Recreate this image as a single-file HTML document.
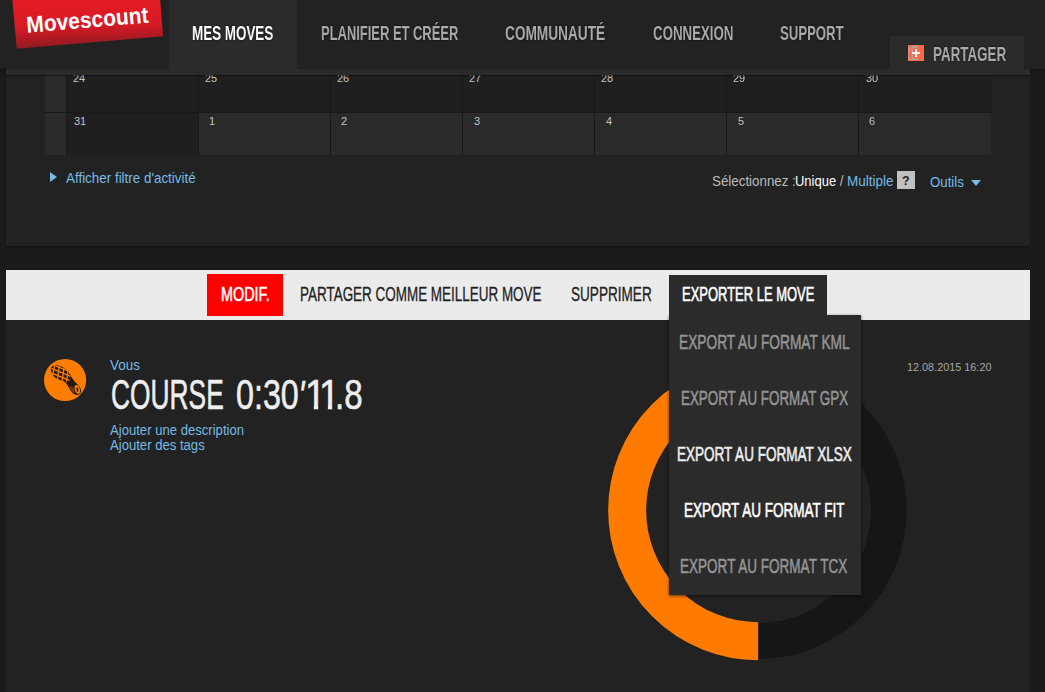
<!DOCTYPE html>
<html lang="fr"><head><meta charset="utf-8"><title>Movescount</title>
<style>
html,body{margin:0;padding:0}
body{width:1045px;height:692px;overflow:hidden;background:#1b1b1b;font-family:"Liberation Sans",sans-serif;font-size:13px;color:#ccc;position:relative}
.a{position:absolute}
.c{position:absolute;white-space:pre;transform-origin:0 0;display:block}
h1{margin:0;font-weight:normal}
.ib{display:inline-block;vertical-align:top;transform-origin:0 0;white-space:pre}
a{text-decoration:none;cursor:pointer}
b{font-weight:normal}
</style></head><body>

<header>
<div class="a" style="left:0px;top:0px;width:1045px;height:69px;background:#222;box-shadow:0 1px 3px rgba(0,0,0,.45)"></div>
<div class="a" style="left:169px;top:0px;width:128px;height:69px;background:#2b2b2b;"></div>
<svg class="a" style="left:0;top:0" width="170" height="60" viewBox="0 0 170 60"><defs><linearGradient id="lg" x1="0" y1="0" x2="0.08" y2="1"><stop offset="0" stop-color="#e31b23"/><stop offset="0.55" stop-color="#d81a25"/><stop offset="1" stop-color="#8f1a22"/></linearGradient></defs><polygon points="12.4,0 160.2,0 163,36.2 16.7,48.8" fill="url(#lg)"/><text x="0" y="0" transform="translate(27,32.8) rotate(-4.8) scale(0.912,1)" font-family="Liberation Sans, sans-serif" font-weight="bold" font-size="23" fill="#fff">Movescount</text></svg>
<nav>
<a class="c" style="left:191.75px;top:23.00px;font-size:20.29px;line-height:20.29px;font-weight:bold;color:#fff;transform:scaleX(0.6615);text-shadow:0 0 2px rgba(0,0,0,.9);will-change:transform;">MES MOVES</a>
<a class="c" style="left:320.75px;top:23.00px;font-size:20.29px;line-height:20.29px;font-weight:bold;color:#aaa;transform:scaleX(0.6379);text-shadow:0 0 2px rgba(0,0,0,.9);will-change:transform;">PLANIFIER ET CRÉER</a>
<a class="c" style="left:505.36px;top:23.00px;font-size:20.29px;line-height:20.29px;font-weight:bold;color:#aaa;transform:scaleX(0.6727);text-shadow:0 0 2px rgba(0,0,0,.9);will-change:transform;">COMMUNAUTÉ</a>
<a class="c" style="left:652.58px;top:23.00px;font-size:20.29px;line-height:20.29px;font-weight:bold;color:#aaa;transform:scaleX(0.6538);text-shadow:0 0 2px rgba(0,0,0,.9);will-change:transform;">CONNEXION</a>
<a class="c" style="left:779.90px;top:23.00px;font-size:20.29px;line-height:20.29px;font-weight:bold;color:#aaa;transform:scaleX(0.6480);text-shadow:0 0 2px rgba(0,0,0,.9);will-change:transform;">SUPPORT</a>
</nav>
<div class="a" style="left:890px;top:36px;width:134px;height:33px;background:#2b2b2b;"></div>
<div class="a" style="left:908px;top:45px;width:16px;height:16px;background:#fb6a48;overflow:hidden"><span class="c" style="left:-5.7px;top:-1.1px;font-size:19.5px;line-height:19.5px;color:#aaa;transform:scaleX(.62);will-change:transform">RE</span><div class="a" style="left:7.25px;top:3.8px;width:1.5px;height:8.7px;background:rgba(255,255,255,.95)"></div><div class="a" style="left:3.6px;top:7.25px;width:8.8px;height:1.5px;background:rgba(255,255,255,.9)"></div></div>
<a class="c" style="left:932.75px;top:44.00px;font-size:20.29px;line-height:20.29px;font-weight:bold;color:#aaa;transform:scaleX(0.6601);text-shadow:0 0 2px rgba(0,0,0,.9);will-change:transform;">PARTAGER</a>
</header>
<section>
<div class="a" style="left:6px;top:69px;width:1024px;height:177px;background:#222;box-shadow:0 1px 2px rgba(0,0,0,.35)"></div>
<div class="a" style="left:45px;top:69px;width:946px;height:86px;background:#1f1f1f;"></div>
<div class="a" style="left:45px;top:75px;width:21px;height:80px;background:#2b2b2b;"></div>
<div class="a" style="left:198px;top:113px;width:793px;height:42px;background:#2a2a2a;"></div>
<div class="a" style="left:45px;top:112px;width:946px;height:1px;background:#181818;"></div>
<div class="a" style="left:66px;top:75px;width:1px;height:80px;background:#181818;"></div>
<div class="a" style="left:198px;top:75px;width:1px;height:80px;background:#181818;"></div>
<div class="a" style="left:330px;top:75px;width:1px;height:80px;background:#181818;"></div>
<div class="a" style="left:462px;top:75px;width:1px;height:80px;background:#181818;"></div>
<div class="a" style="left:594px;top:75px;width:1px;height:80px;background:#181818;"></div>
<div class="a" style="left:726px;top:75px;width:1px;height:80px;background:#181818;"></div>
<div class="a" style="left:858px;top:75px;width:1px;height:80px;background:#181818;"></div>
<span class="c" style="left:73.02px;top:72.80px;font-size:10.67px;line-height:10.67px;font-weight:normal;color:#c4c4c4;transform:scaleX(1.0300);">24</span>
<span class="c" style="left:73.71px;top:115.80px;font-size:10.67px;line-height:10.67px;font-weight:normal;color:#c4c4c4;transform:scaleX(1.0300);">31</span>
<span class="c" style="left:205.02px;top:72.80px;font-size:10.67px;line-height:10.67px;font-weight:normal;color:#c4c4c4;transform:scaleX(1.0300);">25</span>
<span class="c" style="left:208.83px;top:115.80px;font-size:10.67px;line-height:10.67px;font-weight:normal;color:#c4c4c4;transform:scaleX(1.0300);">1</span>
<span class="c" style="left:337.02px;top:72.80px;font-size:10.67px;line-height:10.67px;font-weight:normal;color:#c4c4c4;transform:scaleX(1.0300);">26</span>
<span class="c" style="left:341.02px;top:115.80px;font-size:10.67px;line-height:10.67px;font-weight:normal;color:#c4c4c4;transform:scaleX(1.0300);">2</span>
<span class="c" style="left:469.02px;top:72.80px;font-size:10.67px;line-height:10.67px;font-weight:normal;color:#c4c4c4;transform:scaleX(1.0300);">27</span>
<span class="c" style="left:473.71px;top:115.80px;font-size:10.67px;line-height:10.67px;font-weight:normal;color:#c4c4c4;transform:scaleX(1.0300);">3</span>
<span class="c" style="left:601.02px;top:72.80px;font-size:10.67px;line-height:10.67px;font-weight:normal;color:#c4c4c4;transform:scaleX(1.0300);">28</span>
<span class="c" style="left:606.07px;top:115.80px;font-size:10.67px;line-height:10.67px;font-weight:normal;color:#c4c4c4;transform:scaleX(1.0300);">4</span>
<span class="c" style="left:733.02px;top:72.80px;font-size:10.67px;line-height:10.67px;font-weight:normal;color:#c4c4c4;transform:scaleX(1.0300);">29</span>
<span class="c" style="left:737.69px;top:115.80px;font-size:10.67px;line-height:10.67px;font-weight:normal;color:#c4c4c4;transform:scaleX(1.0300);">5</span>
<span class="c" style="left:865.71px;top:72.80px;font-size:10.67px;line-height:10.67px;font-weight:normal;color:#c4c4c4;transform:scaleX(1.0300);">30</span>
<span class="c" style="left:869.00px;top:115.80px;font-size:10.67px;line-height:10.67px;font-weight:normal;color:#c4c4c4;transform:scaleX(1.0300);">6</span>
<div class="a" style="left:6px;top:69px;width:1024px;height:6px;background:#2b2b2b;box-shadow:0 1px 1px rgba(0,0,0,.4)"></div>
<div class="a" style="left:50px;top:172px;width:0;height:0;border-left:7px solid #74bbe7;border-top:5px solid transparent;border-bottom:5px solid transparent"></div>
<a class="c" style="left:66.25px;top:170.71px;font-size:13.33px;line-height:13.33px;font-weight:normal;color:#74bbe7;transform:scale(1.0055,1.0700);">Afficher filtre d&#x27;activité</a>
<div class="c" style="left:0;top:173.71px;font-size:13.33px;line-height:13.33px"><span class="ib" style="margin-left:711.91px;transform:scale(1.0012,1.07);color:#bbb;">Sélectionnez :</span><b class="ib" style="margin-left:-0.36px;transform:scale(0.9731,1.07);color:#fff;position:relative;top:-0.08px;">Unique</b><span class="ib" style="margin-left:-1.38px;transform:scale(1.0000,1.07);color:#bbb;position:relative;top:-0.03px;"> / </span><a class="ib" style="margin-left:-0.43px;transform:scale(1.0133,1.07);color:#74bbe7;position:relative;top:-0.02px;">Multiple</a></div>
<div class="a" style="left:897px;top:171px;width:18px;height:18px;background:#c0c0c0;"></div>
<span class="c" style="left:902.23px;top:175.09px;font-size:12.5px;line-height:12.5px;font-weight:bold;color:#222;transform:scaleX(0.9977);">?</span>
<a class="c" style="left:929.71px;top:174.66px;font-size:13.33px;line-height:13.33px;font-weight:normal;color:#74bbe7;transform:scale(0.9948,1.0700);">Outils</a>
<div class="a" style="left:971px;top:180px;width:0;height:0;border-top:6.5px solid #74bbe7;border-left:5.5px solid transparent;border-right:5.5px solid transparent"></div>
</section>
<section>
<div class="a" style="left:6px;top:270px;width:1024px;height:422px;background:#222;"></div>
<div class="a" style="left:6px;top:270px;width:1024px;height:50px;background:#ebebeb;"></div>
<div class="a" style="left:207px;top:274px;width:76px;height:42px;background:#ff0000;"></div>
<a class="c" style="left:220.75px;top:284.67px;font-size:19.6px;line-height:19.6px;font-weight:normal;color:#fff;transform:scaleX(0.7344);-webkit-text-stroke:0.5px #fff;">MODIF.</a>
<a class="c" style="left:300.22px;top:284.21px;font-size:20px;line-height:20px;font-weight:normal;color:#222;transform:scaleX(0.6729);-webkit-text-stroke:0.3px #222;">PARTAGER COMME MEILLEUR MOVE</a>
<a class="c" style="left:570.86px;top:284.21px;font-size:20px;line-height:20px;font-weight:normal;color:#222;transform:scaleX(0.6786);-webkit-text-stroke:0.3px #222;">SUPPRIMER</a>
<svg class="a" style="left:600px;top:350px" width="320" height="320" viewBox="600 350 320 320"><circle cx="758" cy="510.2" r="130.85" fill="none" stroke="#161616" stroke-width="35.7"/><path d="M758.15 379.2 A131 131 0 0 0 758.15 641.2" fill="none" stroke="#ff7b00" stroke-width="38"/></svg>
<svg class="a" style="left:40px;top:355px" width="50" height="50" viewBox="40 355 50 50">
<circle cx="65.1" cy="380" r="21.1" fill="#ff7d00"/>
<defs><clipPath id="fore"><path d="M50.9 369.5 C50.6 366.6 53.6 364.6 57.6 365.3 C62.6 366.2 67.2 369.8 70 374.6 L72.3 379.2 L65.2 382 C62.5 380.6 59.3 380.2 56.6 378.6 C53.2 376.6 51.2 373.2 50.9 369.5Z"/></clipPath></defs>
<path d="M50.9 369.5 C50.6 366.6 53.6 364.6 57.6 365.3 C62.6 366.2 67.2 369.8 70 374.6 C72 378 73.4 380.6 76.4 383.2 C79.6 386 81.6 389 81 391.8 C80.4 394.4 78 395.5 75.6 394.8 C72.6 393.9 70.6 390.8 68.9 387.8 C67.4 385.2 66.6 383 64.6 381.8 C62.2 380.4 59.3 380.2 56.6 378.6 C53.2 376.6 51.2 373.2 50.9 369.5Z" fill="#241a10"/>
<g clip-path="url(#fore)" stroke="#ff7d00" stroke-width="1.3" fill="none">
<path d="M51.5 368.4 L70.5 376.4 M50.5 372.6 L70 380.6 M54 365.2 L72 372.6"/>
<path d="M55 363.5 L52.4 377 M59.6 364 L57.4 380 M64.2 366 L62 382 M68.2 369.5 L66.4 382.5"/>
</g>
<ellipse cx="77.3" cy="389.4" rx="2.5" ry="4.5" transform="rotate(-16 77.3 389.4)" fill="#ff7d00"/>
<ellipse cx="77.4" cy="389.6" rx="0.9" ry="2.5" transform="rotate(-12 77.4 389.6)" fill="#241a10"/>
<path d="M69.6 386.4 C71 388.4 72.6 390.8 74 392.6 M71.4 386.2 C72.4 387.8 73.4 389.4 74.4 390.8" stroke="#ff7d00" stroke-width="0.6" fill="none"/>
</svg>
<a class="c" style="left:110.20px;top:357.70px;font-size:13.33px;line-height:13.33px;font-weight:normal;color:#74bbe7;transform:scale(1.0083,1.0700);">Vous</a>
<h1 class="c" style="left:0;top:373.57px;font-size:42.1px;line-height:42.1px;color:#eee;-webkit-text-stroke:0.6px #eee;"><span class="ib" style="margin-left:111.25px;transform:scaleX(0.6259);">COURSE </span><span class="ib" style="margin-left:-67.50px;transform:scaleX(0.7662);">0:30</span><span class="ib" style="margin-left:-15.31px;transform:scaleX(.72) skewX(-13deg);position:relative;top:1.00px;">'</span><span class="ib" style="margin-left:-5.23px;transform:scaleX(0.8860);clip-path:polygon(0 0,100% 0,100% 30.6px,14.9px 30.6px,14.9px 100%,10px 100%,10px 30.6px,0 30.6px);">1</span><span class="ib" style="margin-left:-9.42px;transform:scaleX(0.8860);clip-path:polygon(0 0,100% 0,100% 30.6px,14.9px 30.6px,14.9px 100%,10px 100%,10px 30.6px,0 30.6px);">1</span><span class="ib" style="margin-left:-7.02px;transform:scaleX(0.7875);">.8</span></h1>
<a class="c" style="left:110.25px;top:422.66px;font-size:13.33px;line-height:13.33px;font-weight:normal;color:#74bbe7;transform:scale(0.9830,1.0700);">Ajouter une description</a>
<a class="c" style="left:110.25px;top:437.66px;font-size:13.33px;line-height:13.33px;font-weight:normal;color:#74bbe7;transform:scale(0.9830,1.0700);">Ajouter des tags</a>
<span class="c" style="left:906.83px;top:360.84px;font-size:10.67px;line-height:10.67px;font-weight:normal;color:#a6a6a6;transform:scale(1.0179,1.0700);">12.08.2015 16:20</span>
</section>
<div>
<div class="a" style="left:669px;top:315px;width:192px;height:280px;background:#2b2b2b;box-shadow:0 1px 3px rgba(0,0,0,.6)"></div>
<div class="a" style="left:669px;top:275px;width:158px;height:45px;background:#2b2b2b;"></div>
<a class="c" style="left:681.82px;top:284.67px;font-size:19.6px;line-height:19.6px;font-weight:normal;color:#fff;transform:scaleX(0.6621);-webkit-text-stroke:0.6px #fff;">EXPORTER LE MOVE</a>
<a class="c" style="left:679.29px;top:332.89px;font-size:19.6px;line-height:19.6px;font-weight:normal;color:#969696;transform:scaleX(0.7007);-webkit-text-stroke:0.5px #969696;">EXPORT AU FORMAT KML</a>
<a class="c" style="left:681.40px;top:388.89px;font-size:19.6px;line-height:19.6px;font-weight:normal;color:#969696;transform:scaleX(0.6831);-webkit-text-stroke:0.5px #969696;">EXPORT AU FORMAT GPX</a>
<a class="c" style="left:677.10px;top:444.57px;font-size:19.6px;line-height:19.6px;font-weight:normal;color:#eee;transform:scaleX(0.6901);-webkit-text-stroke:0.6px #eee;">EXPORT AU FORMAT XLSX</a>
<a class="c" style="left:684.17px;top:500.67px;font-size:19.6px;line-height:19.6px;font-weight:normal;color:#fff;transform:scaleX(0.6903);-webkit-text-stroke:0.6px #fff;">EXPORT AU FORMAT FIT</a>
<a class="c" style="left:680.37px;top:556.89px;font-size:19.6px;line-height:19.6px;font-weight:normal;color:#969696;transform:scaleX(0.6909);-webkit-text-stroke:0.5px #969696;">EXPORT AU FORMAT TCX</a>
</div>
</body></html>
